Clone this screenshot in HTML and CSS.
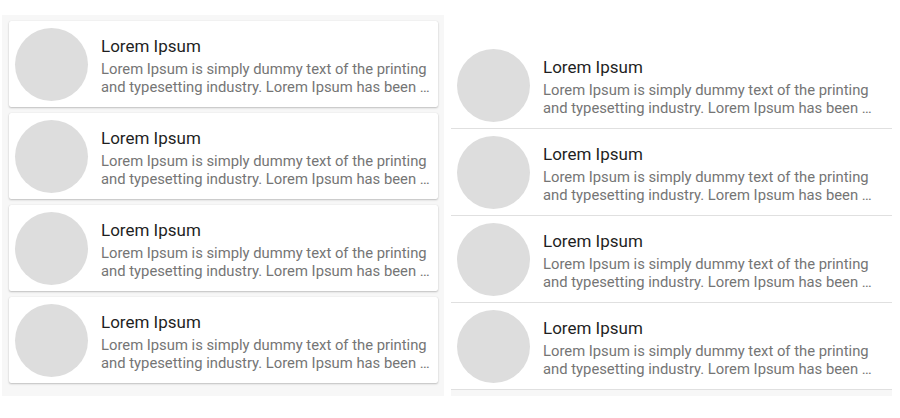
FILE: index.html
```html
<!DOCTYPE html>
<html>
<head>
<meta charset="utf-8">
<link rel="stylesheet" href="styles.css">
</head>
<body>
<div class="page">
  <section class="panel cards">
    <div class="card"><div class="avatar"></div><div class="text"><div class="title">Lorem Ipsum</div><div class="body">Lorem Ipsum is simply dummy text of the printing and typesetting industry. Lorem Ipsum has been …</div></div></div>
    <div class="card"><div class="avatar"></div><div class="text"><div class="title">Lorem Ipsum</div><div class="body">Lorem Ipsum is simply dummy text of the printing and typesetting industry. Lorem Ipsum has been …</div></div></div>
    <div class="card"><div class="avatar"></div><div class="text"><div class="title">Lorem Ipsum</div><div class="body">Lorem Ipsum is simply dummy text of the printing and typesetting industry. Lorem Ipsum has been …</div></div></div>
    <div class="card"><div class="avatar"></div><div class="text"><div class="title">Lorem Ipsum</div><div class="body">Lorem Ipsum is simply dummy text of the printing and typesetting industry. Lorem Ipsum has been …</div></div></div>
  </section>
  <section class="panel list">
    <div class="row"><div class="avatar"></div><div class="text"><div class="title">Lorem Ipsum</div><div class="body">Lorem Ipsum is simply dummy text of the printing and typesetting industry. Lorem Ipsum has been …</div></div></div>
    <div class="row"><div class="avatar"></div><div class="text"><div class="title">Lorem Ipsum</div><div class="body">Lorem Ipsum is simply dummy text of the printing and typesetting industry. Lorem Ipsum has been …</div></div></div>
    <div class="row"><div class="avatar"></div><div class="text"><div class="title">Lorem Ipsum</div><div class="body">Lorem Ipsum is simply dummy text of the printing and typesetting industry. Lorem Ipsum has been …</div></div></div>
    <div class="row"><div class="avatar"></div><div class="text"><div class="title">Lorem Ipsum</div><div class="body">Lorem Ipsum is simply dummy text of the printing and typesetting industry. Lorem Ipsum has been …</div></div></div>
  </section>
</div>
</body>
</html>
```
FILE: styles.css
```css
* { box-sizing: border-box; }
html, body { margin: 0; padding: 0; background: #ffffff; }
body { font-family: Roboto, "Noto Sans", sans-serif; }
.page { display: flex; align-items: flex-start; }
.panel { background: #f7f7f7; }
.cards {
  margin: 15px 0 0 2px;
  width: 442px;
  height: 381px;
  padding: 6px 6px 0 7px;
  display: flex;
  flex-direction: column;
  gap: 6px;
}
.card {
  height: 86px;
  background: #fff;
  border-radius: 2px;
  box-shadow: 0 1px 2px rgba(0,0,0,0.22), 0 0 1px rgba(0,0,0,0.12);
  display: flex;
  align-items: center;
  padding: 0 4px 0 6px;
  gap: 13px;
}
.list {
  margin: 42px 0 0 7px;
  width: 441px;
  padding-bottom: 6px;
}
.row {
  height: 87px;
  background: #fff;
  border-bottom: 1px solid #e0e0e0;
  display: flex;
  align-items: center;
  padding: 0 6px;
  gap: 13px;
}
.avatar {
  flex: none;
  width: 73px;
  height: 73px;
  border-radius: 50%;
  background: #dddddd;
}
.text { flex: 1; min-width: 0; padding-top: 4px; }
.title {
  font-size: 17px;
  line-height: 21px;
  color: #1f1f1f;
  margin-bottom: 3px;
}
.body {
  font-size: 14.8px;
  line-height: 18px;
  color: #757575;
}
```
